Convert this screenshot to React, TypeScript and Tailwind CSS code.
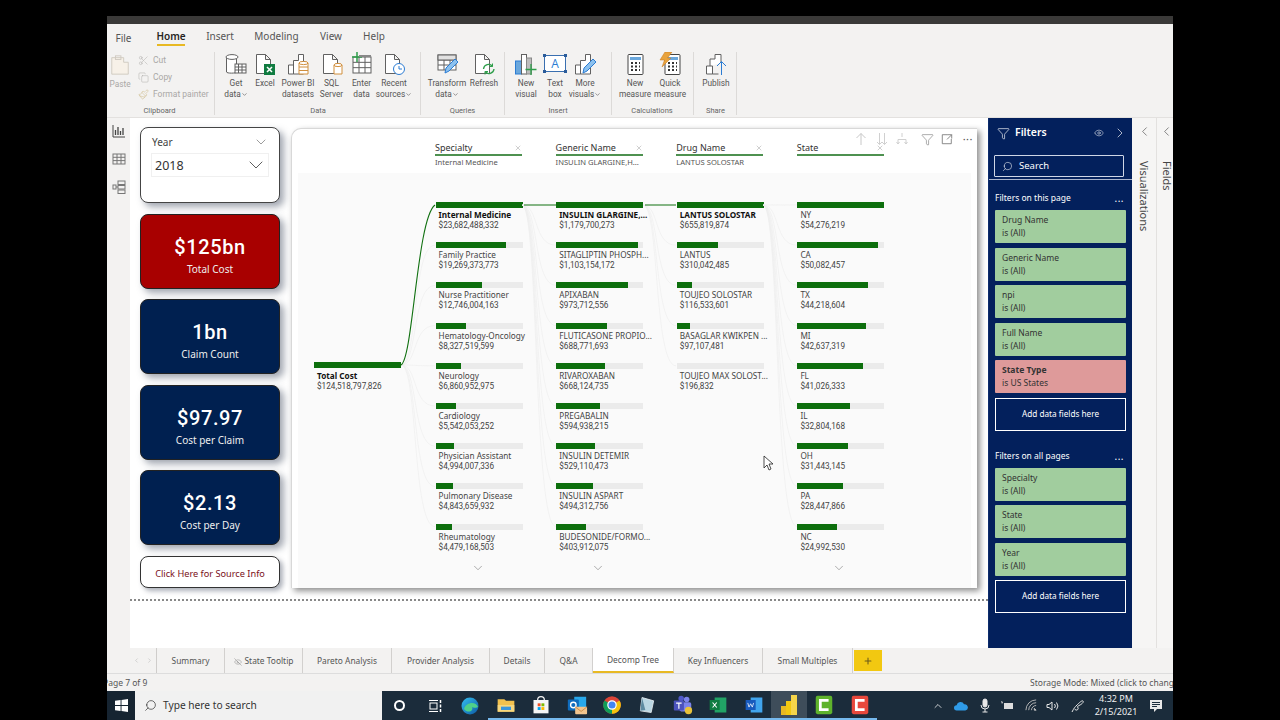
import React from "react";
import { ChevronDown, ChevronLeft, ChevronRight, ChevronUp, Copy, Eye, EyeOff, Filter, Paintbrush, Plus, Scissors, Search, X } from "lucide-react";

const S = ({ children, s = 24 }: { children: React.ReactNode; s?: number }) => (
  <svg width={s} height={s} viewBox="0 0 24 24" fill="none" stroke="#616161" strokeWidth="1">{children}</svg>
);
const Doc = () => <path d="M3.5 2.5h9l5 5v14h-14z M12.5 2.5v5h5" fill="#fff" />;
const Bars = () => <path d="M2.5 22v-9h5v9z M7.5 22V8.500h5V2.500h5v19.500z" fill="#fff" />;
const Cyl = ({ x = 14, y = 13, w = 8, h = 9 }) => (
  <g stroke="#d18f3d" fill="#fff"><path d={`M${x} ${y}v${h}h${w}v-${h}`} /><ellipse cx={x + w / 2} cy={y} rx={w / 2} ry="1.600" /></g>
);
const Tbl = ({ x = 3, y = 4, w = 18, h = 16 }) => (
  <g fill="#fff"><rect x={x} y={y} width={w} height={h} /><path d={`M${x} ${y + h / 3}h${w}M${x} ${y + 2 * h / 3}h${w}M${x + w / 3} ${y}v${h}M${x + 2 * w / 3} ${y}v${h}`} /></g>
);
const Pencil = () => <path d="M10 21l1-5L20 7l3 3-9 9z" fill="#8cc1ee" stroke="#2b7cd3" />;
const Calc = ({ x = 5 }) => (
  <g><rect x={x} y="2.500" width="15" height="20" rx="1" fill="#fff" stroke="#444" /><rect x={x + 2} y="5" width="11" height="3" fill="#6aa7dc" stroke="none" />
    <path d={`M${x + 3} 11h2M${x + 7} 11h2M${x + 11} 11h1M${x + 3} 14.500h2M${x + 7} 14.500h2M${x + 11} 14.500h1M${x + 3} 18h2M${x + 7} 18h2M${x + 11} 18h1`} stroke="#333" strokeWidth="1.800" /></g>
);

const icons: Record<string, React.ReactNode> = {
  get: <S><path d="M2.500 5v15c0 1.500 10 1.500 10 0V5" fill="#fff" /><ellipse cx="8" cy="5" rx="6" ry="2.400" fill="#fff" /><rect x="11" y="12" width="11" height="9" fill="#fff" /><path d="M11 15h11M11 18h11M14.500 12v9M18 12v9" /></S>,
  excel: <S><Doc /><rect x="11" y="12" width="11" height="11" fill="#107c41" stroke="none" /><path d="M14 15l5 5M19 15l-5 5" stroke="#fff" strokeWidth="1.500" /></S>,
  pbi: <S><Bars /><Cyl x={13} y={11} w={9} h={11} /><path d="M13 15h9M13 18.500h9" stroke="#d18f3d" /></S>,
  sql: <S><Doc /><Cyl /></S>,
  enter: <S><Tbl y={5} h={16} /><path d="M7 0v10M2 5h10" stroke="#2e9e4a" strokeWidth="1.500" /><rect x="9" y="3" width="12" height="2" fill="#888" stroke="none" /></S>,
  recent: <S><Doc /><circle cx="17" cy="17" r="5.500" fill="#fff" stroke="#2b7cd3" /><path d="M17 14v3h3" stroke="#2b7cd3" /></S>,
  transform: <S><Tbl y={3} h={15} /><rect x="3" y="3" width="18" height="5" fill="#e1e1e1" /><Pencil /></S>,
  refresh: <S><Doc /><path d="M11.500 17a5 5 0 0 1 9-2.500M22 17a5 5 0 0 1-9 2.500" stroke="#2e9e4a" strokeWidth="1.300" /><path d="M20.500 11.500v3h-3M13 22.500v-3h3" stroke="#2e9e4a" /></S>,
  newv: <S><rect x="1.500" y="9" width="6" height="13" fill="#6aa7dc" stroke="#2b7cd3" /><rect x="7.500" y="2.500" width="5" height="19.500" fill="#fff" /><rect x="12.500" y="6" width="5" height="16" fill="#bdbdbd" stroke="#888" /><path d="M17 12v11M11.500 17.500h11" stroke="#2e9e4a" strokeWidth="1.300" /></S>,
  text: <S><rect x="1.500" y="3.500" width="21" height="16" fill="#fff" stroke="#3a6fb0" /><text x="12" y="16" fontSize="12" textAnchor="middle" fill="#2b7cd3" stroke="none" fontFamily="Open Sans">A</text><path d="M0 2h3v3H0zM21 2h3v3h-3zM0 18h3v3H0zM21 18h3v3h-3z" fill="#2b5c9a" stroke="none" /></S>,
  more: <S><Bars /><Pencil /></S>,
  measure: <S><Calc /></S>,
  quick: <S><Calc x={7} /><path d="M7 0h7L9.500 6H13L4 15l2.500-7H2z" fill="#e8a33d" stroke="#c9761a" strokeWidth="0.500" /></S>,
  publish: <S><path d="M2.500 22v-8h6v8z M6 14V7h5V2.500h6V11" fill="#fff" /><path d="M8.500 22h6" /><path d="M17.500 23V10M13 14l4.500-4.500L22 14" stroke="#2b7cd3" /></S>,
};

type Btn = { k: string; a: string; b?: string; w: string; caret?: boolean };
type Grp = { label: string; cls: string; items: Btn[] };
const groups: Grp[] = [
  { label: "Data", cls: "w-[206px] pl-[7px]", items: [
    { k: "get", a: "Get", b: "data", w: "w-[28px]", caret: true }, { k: "excel", a: "Excel", w: "w-[30px]" }, { k: "pbi", a: "Power BI", b: "datasets", w: "w-[36px]" },
    { k: "sql", a: "SQL", b: "Server", w: "w-[31px]" }, { k: "enter", a: "Enter", b: "data", w: "w-[29px]" }, { k: "recent", a: "Recent", b: "sources", w: "w-[36px]", caret: true } ] },
  { label: "Queries", cls: "w-[84px] pl-[6px]", items: [
    { k: "transform", a: "Transform", b: "data", w: "w-[40px]", caret: true }, { k: "refresh", a: "Refresh", w: "w-[34px]" } ] },
  { label: "Insert", cls: "w-[107px] pl-[6px]", items: [
    { k: "newv", a: "New", b: "visual", w: "w-[30px]" }, { k: "text", a: "Text", b: "box", w: "w-[28px]" }, { k: "more", a: "More", b: "visuals", w: "w-[32px]", caret: true } ] },
  { label: "Calculations", cls: "w-[82px] pl-[5px]", items: [
    { k: "measure", a: "New", b: "measure", w: "w-[36px]" }, { k: "quick", a: "Quick", b: "measure", w: "w-[34px]" } ] },
  { label: "Share", cls: "w-[43px] pl-[7px]", items: [{ k: "publish", a: "Publish", w: "w-[30px]" }] },
];

const ribbonTabs = [
  { t: "File", c: "ml-[9px] w-[15px] text-[10px] pt-[2px]" },
  { t: "Home", c: "ml-[26px] w-[28px] font-semibold border-b-2 border-[#e8b923] text-[#252423]" },
  { t: "Insert", c: "ml-[22px] w-[26px]" },
  { t: "Modeling", c: "ml-[22px] w-[43px]" },
  { t: "View", c: "ml-[22px] w-[22px]" },
  { t: "Help", c: "ml-[21px] w-[22px]" },
];

const R = (name: string, v: string) => ({ name, v });
const specialty = [R("Internal Medicine", "$23,682,488,332"), R("Family Practice", "$19,269,373,773"), R("Nurse Practitioner", "$12,746,004,163"), R("Hematology-Oncology", "$8,327,519,599"), R("Neurology", "$6,860,952,975"), R("Cardiology", "$5,542,053,252"), R("Physician Assistant", "$4,994,007,336"), R("Pulmonary Disease", "$4,843,659,932"), R("Rheumatology", "$4,479,168,503")];
const generic = [R("INSULIN GLARGINE,...", "$1,179,700,273"), R("SITAGLIPTIN PHOSPH...", "$1,103,154,172"), R("APIXABAN", "$973,712,556"), R("FLUTICASONE PROPIO...", "$688,771,693"), R("RIVAROXABAN", "$668,124,735"), R("PREGABALIN", "$594,938,215"), R("INSULIN DETEMIR", "$529,110,473"), R("INSULIN ASPART", "$494,312,756"), R("BUDESONIDE/FORMO...", "$403,912,075")];
const drug = [R("LANTUS SOLOSTAR", "$655,819,874"), R("LANTUS", "$310,042,485"), R("TOUJEO SOLOSTAR", "$116,533,601"), R("BASAGLAR KWIKPEN ...", "$97,107,481"), R("TOUJEO MAX SOLOST...", "$196,832")];
const state = [R("NY", "$54,276,219"), R("CA", "$50,082,457"), R("TX", "$44,218,604"), R("MI", "$42,637,319"), R("FL", "$41,026,333"), R("IL", "$32,804,168"), R("OH", "$31,443,145"), R("PA", "$28,447,866"), R("NC", "$24,992,530")];
const num = (s: string) => Number(s.replace(/[$,]/g, ""));

const cols = [
  { title: "Specialty", sub: "Internal Medicine", rows: specialty, more: true, bold: true },
  { title: "Generic Name", sub: "INSULIN GLARGINE,H...", rows: generic, more: true, bold: true },
  { title: "Drug Name", sub: "LANTUS SOLOSTAR", rows: drug, more: false, bold: true },
  { title: "State", sub: "", rows: state, more: true, bold: false },
];

function curve(x1: number, y1: number, x2: number, y2: number) {
  const m = (x1 + x2) / 2;
  return `M${x1} ${y1}C${m} ${y1} ${m - 6} ${y2} ${x2} ${y2}`;
}
const Connectors = () => {
  const light: string[] = [];
  const rowY = (i: number) => 77 + i * 40.2;
  for (let i = 1; i < 9; i++) light.push(curve(110, 237, 144, rowY(i)));
  for (let i = 1; i < 9; i++) light.push(curve(231, 77, 265, rowY(i)));
  for (let i = 1; i < 5; i++) light.push(curve(352, 77, 385, rowY(i)));
  for (let i = 0; i < 9; i++) light.push(curve(472, 77, 506, rowY(i)));
  return (
    <svg className="absolute -left-px -top-px pointer-events-none" width="686" height="460" fill="none">
      {light.map((d, i) => <path key={i} d={d} stroke="#ececec" strokeWidth="0.600" />)}
      <path d="M110 237C122 231 126 90 144 77" stroke="#107010" strokeWidth="1.100" />
      <path d="M233 77h32M354 77h31" stroke="#107010" strokeWidth="1.100" />
    </svg>
  );
};

const Node = ({ name, v, pct, bold }: { name: string; v: string; pct: number; bold?: boolean }) => (
  <div className="h-[40.2px]">
    <div className="h-[6px] w-[87px] bg-[#ebebeb]"><div className="h-full bg-[#0d6f0d]" style={{ width: `${pct}%` }} /></div>
    <div className={`ml-[3px] mt-[2px] text-[8.200px] leading-[10px] whitespace-nowrap ${bold ? "font-bold text-[#111]" : "text-[#444]"}`}>{name}</div>
    <div className="ml-[3px] text-[8.200px] leading-[10px] text-[#444] whitespace-nowrap font-['Roboto',sans-serif]">{v}</div>
  </div>
);

const Kpi = ({ v, l, red }: { v: string; l: string; red?: boolean }) => (
  <div className={`h-[75px] rounded-[8px] border border-[#222] shadow-[4px_4px_7px_rgba(70,80,100,0.5)] flex flex-col items-center justify-center text-white pt-[7px] ${red ? "bg-[#a80000]" : "bg-[#002050]"}`}>
    <div className="text-[20px] leading-[26px] font-medium tracking-[0.6px] font-['Roboto',sans-serif]">{v}</div>
    <div className="mt-[2px] text-[10px] leading-[14px] text-[#eee]">{l}</div>
  </div>
);

const FilterCard = ({ a, b = "is (All)", pink }: { a: string; b?: string; pink?: boolean }) => (
  <div className={`h-[33px] mb-[4.500px] mx-[6px] rounded-[1px] pl-[7px] pt-[3px] text-[8.500px] leading-[13px] text-[#333] ${pink ? "bg-[#de9a9a]" : "bg-[#a1cd9e]"}`}>
    <div className={pink ? "font-bold" : ""}>{a}</div><div>{b}</div>
  </div>
);
const AddData = () => (
  <div className="mx-[6px] h-[33px] border border-white flex items-center justify-center text-[8.200px] text-white">Add data fields here</div>
);
const FilterHead = ({ t }: { t: string }) => (
  <div className="mx-[6px] flex items-center justify-between text-[8.500px] leading-[12px] text-white pr-[2px]"><span>{t}</span><span className="text-[10px] leading-[8px] tracking-[0.5px]">...</span></div>
);

const pageTabs = [
  { t: "Summary", w: "w-[68px]" }, { t: "State Tooltip", w: "w-[78px]", eye: true }, { t: "Pareto Analysis", w: "w-[89px]" }, { t: "Provider Analysis", w: "w-[98px]" },
  { t: "Details", w: "w-[55px]" }, { t: "Q&A", w: "w-[48px]" }, { t: "Decomp Tree", w: "w-[81px]", on: true }, { t: "Key Influencers", w: "w-[89px]" }, { t: "Small Multiples", w: "w-[90px]" },
];

const apps: React.ReactNode[] = [
  <svg width="24" height="24" viewBox="0 0 24 24" fill="none"><circle cx="12" cy="12" r="8.500" fill="url(#e1)" /><path d="M6 15c2-7 12-8 14-2-1 1-5 1-6 0 2 4-4 7-8 2z" fill="#4fd08a" /><defs><linearGradient id="e1" x1="0" y1="0" x2="1" y2="1"><stop stopColor="#35c1f1" /><stop offset="1" stopColor="#0c59a4" /></linearGradient></defs></svg>,
  <svg width="20" height="20" viewBox="0 0 24 24"><path d="M2 5h8l2 2h10v13H2z" fill="#f2c14e" /><rect x="2" y="12" width="20" height="8" fill="#f6d77f" /><rect x="6" y="14" width="12" height="4" fill="#3a96dd" /></svg>,
  <svg width="20" height="20" viewBox="0 0 24 24"><rect x="3" y="6" width="18" height="16" fill="#f5f5f5" /><path d="M8 6a4 4 0 0 1 8 0" stroke="#f5f5f5" strokeWidth="1.500" fill="none" /><rect x="8" y="10" width="3.500" height="3.500" fill="#f25022" /><rect x="12.500" y="10" width="3.500" height="3.500" fill="#7fba00" /><rect x="8" y="14.500" width="3.500" height="3.500" fill="#00a4ef" /><rect x="12.500" y="14.500" width="3.500" height="3.500" fill="#ffb900" /></svg>,
  <svg width="22" height="22" viewBox="0 0 24 24"><rect x="9" y="3" width="13" height="13" fill="#28a8ea" /><rect x="2" y="6" width="12" height="12" rx="1" fill="#0f6cbd" /><circle cx="8" cy="12" r="3" fill="none" stroke="#fff" strokeWidth="1.500" /><rect x="10" y="14" width="13" height="8" rx="1" fill="#f2c48d" /><path d="M10 14l6.500 5 6.500-5" fill="none" stroke="#c98a45" /></svg>,
  <svg width="20" height="20" viewBox="0 0 24 24"><circle cx="12" cy="12" r="10.500" fill="#db4437" /><path d="M12 12L21 6.500A10.500 10.500 0 0 1 12 22.500z" fill="#f4c20d" /><path d="M12 12L12 22.500A10.500 10.500 0 0 1 3 6.500z" fill="#0f9d58" /><circle cx="12" cy="12" r="5" fill="#4285f4" stroke="#fff" strokeWidth="1.500" /></svg>,
  <svg width="20" height="20" viewBox="0 0 24 24"><path d="M6 3l14 4-3 14-13-2z" fill="#b9d6e2" stroke="#e8eef2" /><path d="M6 3L4 19l6-1z" fill="#5d8aa0" /></svg>,
  <svg width="22" height="22" viewBox="0 0 24 24"><circle cx="16" cy="6" r="3" fill="#7b83eb" /><circle cx="10" cy="5" r="3" fill="#5059c9" /><rect x="8" y="9" width="13" height="10" rx="2" fill="#7b83eb" /><rect x="2" y="7" width="11" height="11" rx="1" fill="#4b53bc" /><path d="M4.500 10h6M7.500 10v6" stroke="#fff" strokeWidth="1.300" /><circle cx="18" cy="18" r="4" fill="#e8c23a" /></svg>,
  <svg width="20" height="20" viewBox="0 0 24 24"><rect x="8" y="3" width="14" height="18" fill="#21a366" /><rect x="2" y="6" width="12" height="12" fill="#107c41" /><path d="M5.500 9l5 6M10.500 9l-5 6" stroke="#fff" strokeWidth="1.300" /></svg>,
  <svg width="20" height="20" viewBox="0 0 24 24"><rect x="8" y="3" width="14" height="18" fill="#41a5ee" /><rect x="2" y="6" width="12" height="12" fill="#185abd" /><path d="M4.500 9.500l1.500 5 2-4 2 4 1.500-5" stroke="#fff" strokeWidth="0.900" fill="none" /></svg>,
  <svg width="24" height="24" viewBox="0 0 24 24"><rect x="4" y="13" width="6" height="9" fill="#e8b923" /><rect x="9" y="8" width="6" height="14" fill="#f2c811" /><rect x="14" y="2" width="6" height="20" fill="#f6d54a" /></svg>,
  <svg width="22" height="22" viewBox="0 0 24 24"><rect x="3" y="2" width="18" height="20" rx="2" fill="#5fb32c" /><path d="M17 7H8v10h9" stroke="#fff" strokeWidth="3" fill="none" /></svg>,
  <svg width="22" height="22" viewBox="0 0 24 24"><rect x="3" y="2" width="18" height="20" rx="2" fill="#e8483c" /><path d="M17 7H8v10h9" stroke="#fff" strokeWidth="3" fill="none" /></svg>,
];

export default function App() {
  return (
    <div className="w-[1280px] h-[720px] overflow-hidden bg-black flex justify-center font-['Noto_Sans','Open_Sans',sans-serif] text-[#444]">
      <div className="w-[1066px] h-full flex flex-col">
        <div className="h-[16px] shrink-0 bg-black" />
        <div className="h-[8px] shrink-0 bg-[#3a3938]" />

        {/* Ribbon */}
        <div className="h-[26px] shrink-0 bg-[#f3f2f1] flex items-end pb-[4px] text-[10px] leading-[14px] text-[#555]">
          {ribbonTabs.map((t) => <div key={t.t} className={`${t.c} whitespace-nowrap flex justify-center h-[17px]`}>{t.t}</div>)}
        </div>
        <div className="h-[68px] shrink-0 bg-[#f3f2f1] border-b border-[#e3e1df] flex text-[8.300px] leading-[11px] text-[#555] font-['Roboto',sans-serif]">
          <div className="w-[108px] flex flex-col border-r border-[#dcdad8] my-[2px]">
            <div className="flex flex-1 pl-[3px] text-[#aaa8a6]">
              <div className="w-[20px] flex flex-col items-center pt-[1px]">
                <svg width="22" height="24" viewBox="0 0 24 24" fill="none" stroke="#cfc9c0"><path d="M3 4h13v5h5v13H3z" fill="#f7f1e8" /><rect x="7" y="2" width="6" height="4" /></svg>
                <div className="mt-[2px]">Paste</div>
              </div>
              <div className="ml-[8px] flex flex-col gap-[3px] pt-[1px] text-[8.500px]">
                <div className="flex items-center gap-[4px] h-[14px]"><Scissors size={11} strokeWidth={1} color="#a9a7a5" />Cut</div>
                <div className="flex items-center gap-[4px] h-[14px]"><Copy size={11} strokeWidth={1} color="#a9a7a5" />Copy</div>
                <div className="flex items-center gap-[4px] h-[14px]"><Paintbrush size={11} strokeWidth={1} color="#c9b27a" />Format painter</div>
              </div>
            </div>
            <div className="h-[12px] pt-[2px] text-center text-[7.500px] text-[#666] pr-[2px]">Clipboard</div>
          </div>
          {groups.map((g) => (
            <div key={g.label} className={`${g.cls} shrink-0 flex flex-col border-r border-[#dcdad8] my-[2px]`}>
              <div className="flex flex-1">
                {g.items.map((b) => (
                  <div key={b.k} className={`${b.w} shrink-0 flex flex-col items-center`}>
                    {icons[b.k]}
                    <div className="mt-[2px] whitespace-nowrap">{b.a}</div>
                    {b.b && <div className="whitespace-nowrap flex items-center">{b.b}{b.caret && <ChevronDown size={7} strokeWidth={2} />}</div>}
                  </div>
                ))}
              </div>
              <div className="h-[12px] pt-[2px] text-center text-[7.500px] text-[#666] -ml-[6px]">{g.label}</div>
            </div>
          ))}
        </div>

        {/* Body */}
        <div className="h-[530px] shrink-0 flex">
          <div className="w-[23px] shrink-0 bg-[#f3f2f1] flex flex-col items-center pt-[6px] gap-[14px]">
            <svg width="14" height="14" viewBox="0 0 14 14" fill="none" stroke="#444"><path d="M1 1v12h12" /><path d="M3.500 11V6M6 11V3M8.500 11V7M11 11V4" strokeWidth="1.300" /></svg>
            <svg width="14" height="14" viewBox="0 0 14 14" fill="none" stroke="#777"><rect x="1" y="2" width="12" height="10" /><path d="M1 5.300h12M1 8.600h12M5 2v10M9 2v10" /></svg>
            <svg width="14" height="14" viewBox="0 0 14 14" fill="none" stroke="#777"><rect x="6" y="1" width="7" height="3.500" /><rect x="6" y="5.500" width="7" height="3.500" /><rect x="6" y="10" width="7" height="3.500" /><rect x="1" y="5" width="3" height="4" /><path d="M4 7h2" /></svg>
          </div>

          <div className="w-[858px] shrink-0 bg-white flex flex-col">
            <div className="flex h-[461px] mt-[9px] pl-[10px]">
              <div className="w-[140px] flex flex-col gap-[10.500px] shrink-0">
                <div className="h-[76px] rounded-[8px] border border-[#444] bg-white shadow-[4px_4px_7px_rgba(70,80,100,0.5)] px-[10px] pt-[7px]">
                  <div className="flex items-center justify-between text-[10px] leading-[14px] text-[#444] pl-[1px] h-[14px]">Year<ChevronDown size={16} strokeWidth={0.800} /></div>
                  <div className="mt-[4px] h-[24px] border border-[#f0f0f0] flex items-center justify-between text-[12.500px] text-[#333] pl-[3px] pt-[3px]">2018<ChevronDown className="-mt-[3px]" size={24} strokeWidth={0.800} /></div>
                </div>
                <Kpi v="$125bn" l="Total Cost" red />
                <Kpi v="1bn" l="Claim Count" />
                <Kpi v="$97.97" l="Cost per Claim" />
                <Kpi v="$2.13" l="Cost per Day" />
                <div className="h-[32px] rounded-[8px] border border-[#333] bg-white shadow-[3px_3px_5px_rgba(70,80,100,0.45)] flex items-center justify-center text-[9.200px] text-[#7a1020] pt-[4px]">Click Here for Source Info</div>
              </div>

              <div className="relative ml-[11px] mt-px w-[686px] h-[460px] bg-white rounded-tl-[10px] border-l border-t border-[#d8d8d8] shadow-[3px_3px_6px_rgba(0,0,0,0.45)] shrink-0">
                <div className="h-[44px] flex pl-[143px] gap-[33.600px] relative">
                  {cols.map((c) => (
                    <div key={c.title} className="w-[87px] shrink-0 pt-[12px]">
                      <div className="flex items-center justify-between border-b-2 border-[#4e9150] h-[15px] text-[9px] text-[#333]">
                        <span className="mt-[1px]">{c.title}</span><X size={8} strokeWidth={1.200} color="#888" className="mb-[-1px]" />
                      </div>
                      <div className="text-[7.600px] leading-[12px] whitespace-nowrap text-[#555]">{c.sub}</div>
                    </div>
                  ))}
                </div>
                <div className="absolute right-[2px] top-[3px] flex items-center text-[#c4c4c4] h-[14px]">
                  <svg width="14" height="14" viewBox="0 0 14 14" fill="none" stroke="#c8c8c8"><path d="M7 13V1.500M2.500 6L7 1.500 11.500 6" /></svg>
                  <svg className="ml-[7px]" width="14" height="14" viewBox="0 0 14 14" fill="none" stroke="#d0d0d0"><path d="M4.500 1v11.500M2 10l2.500 2.500L7 10M9.500 1v11.500M7 10l2.500 2.500L12 10" /></svg>
                  <svg className="ml-[6px]" width="14" height="14" viewBox="0 0 14 14" fill="none" stroke="#d0d0d0"><path d="M7 1v4M3 12V7.500h8V12M1.500 10L3 12l1.500-2M9.500 10l1.500 2 1.500-2" /></svg>
                  <Filter className="ml-[12px]" size={13} strokeWidth={1} color="#666" />
                  <svg className="ml-[7px]" width="12" height="12" viewBox="0 0 14 14" fill="none" stroke="#777"><path d="M8 2H1.500v10.500H12V7M8 2h4.500v4.500M12.500 2L7 7.500" /></svg>
                  <span className="ml-[10px] mr-[2px] text-[#555] text-[11px] leading-[6px] tracking-[0.5px]">···</span>
                </div>
                <div className="mx-[6px] h-[415px] bg-[#fafafa] flex pl-[17px] pt-[29px] gap-[33.600px]">
                  <div className="w-[87px] shrink-0 pt-[160px] -ml-px mr-px">
                    <div className="h-[6px] bg-[#0d6f0d]" />
                    <div className="ml-[3px] mt-[3px] text-[8.200px] leading-[10px] font-bold text-[#111]">Total Cost</div>
                    <div className="ml-[3px] text-[8.200px] leading-[10px] text-[#444] font-['Roboto',sans-serif]">$124,518,797,826</div>
                  </div>
                  {cols.map((c) => {
                    const max = num(c.rows[0].v);
                    return (
                      <div key={c.title} className="w-[87px] shrink-0">
                        {c.rows.map((r, i) => <Node key={r.name} name={r.name} v={r.v} pct={(num(r.v) / max) * 100} bold={c.bold && i === 0} />)}
                        {c.more && <div className="flex justify-center pr-[3px] -mt-[3px]"><ChevronDown size={14} strokeWidth={0.900} color="#666" /></div>}
                      </div>
                    );
                  })}
                </div>
                <Connectors />
              </div>
            </div>
            <div className="mt-[11px] border-t-2 border-dotted border-[#888]" />
          </div>

          {/* Filters */}
          <div className="w-[144px] shrink-0 bg-[#03205c] flex flex-col text-white border-l border-[#0d2c6c]">
            <div className="h-[29px] flex items-center pl-[8px] pr-[4px] pt-[1px]">
              <Filter size={13} strokeWidth={1.200} />
              <span className="ml-[5px] text-[10.500px] font-semibold">Filters</span>
              <Eye className="ml-auto" size={10} strokeWidth={1.200} />
              <ChevronRight className="ml-[8px]" size={16} strokeWidth={1} />
            </div>
            <div className="ml-[5px] mr-[8px] mt-[8px] h-[22px] border border-[#cfd6e6] rounded-[1px] flex items-center pl-[7px] text-[9.500px]">
              <Search size={11} strokeWidth={1.200} className="-scale-x-100" /><span className="ml-[6px]">Search</span>
            </div>
            <div className="mt-[2px] border-t border-[#aab4cc]" />
            <div className="mt-[12px]"><FilterHead t="Filters on this page" /></div>
            <div className="mt-[6px]">
              <FilterCard a="Drug Name" /><FilterCard a="Generic Name" /><FilterCard a="npi" /><FilterCard a="Full Name" />
              <FilterCard a="State Type" b="is US States" pink />
              <AddData />
            </div>
            <div className="mt-[19px]"><FilterHead t="Filters on all pages" /></div>
            <div className="mt-[6px]">
              <FilterCard a="Specialty" /><FilterCard a="State" /><FilterCard a="Year" />
              <AddData />
            </div>
          </div>

          <div className="w-[25px] shrink-0 bg-[#f6f5f4] border-r border-[#e3e1df] flex flex-col items-center pt-[6px] text-[#444]">
            <ChevronLeft size={15} strokeWidth={1} />
            <div className="mt-[22px] [writing-mode:vertical-rl] text-[11px] leading-[14px]">Visualizations</div>
          </div>
          <div className="w-[16px] shrink-0 bg-[#f6f5f4] flex flex-col items-center pt-[6px] pl-[3px] text-[#444]">
            <ChevronLeft size={15} strokeWidth={1} />
            <div className="mt-[22px] [writing-mode:vertical-rl] text-[11px] leading-[14px]">Fields</div>
          </div>
        </div>

        {/* Tabs */}
        <div className="h-[26px] shrink-0 bg-[#f3f2f1] flex text-[8.400px] text-[#555] border-b border-[#ddd]">
          <div className="w-[23px] shrink-0 bg-[#f3f2f1]" />
          <div className="w-[27px] shrink-0 flex items-center justify-center gap-[6px] text-[#bbb] border-r border-[#cfcdcb]">
            <ChevronLeft size={7} strokeWidth={2} /><ChevronRight size={7} strokeWidth={2} />
          </div>
          {pageTabs.map((t) => (
            <div key={t.t} className={`${t.w} shrink-0 flex items-center justify-center gap-[3px] border-r border-[#d2d0ce] whitespace-nowrap pt-[2px] ${t.on ? "bg-white border-b-2 border-b-[#e8b923]" : ""}`}>
              {t.eye && <EyeOff size={8} strokeWidth={1} />}{t.t}
            </div>
          ))}
          <div className="ml-px my-[2px] w-[28px] bg-[#f2c811] flex items-center justify-center"><Plus size={10} strokeWidth={2.500} color="#6b5a1a" /></div>
        </div>

        {/* Status */}
        <div className="h-[17px] shrink-0 bg-[#f3f2f1] flex items-center justify-between text-[8.500px] text-[#555] overflow-hidden whitespace-nowrap pt-[1px]">
          <span className="-ml-[4px]">Page 7 of 9</span>
          <span className="w-[143px] overflow-hidden">Storage Mode: Mixed (click to change)</span>
        </div>

        {/* Taskbar */}
        <div className="h-[29px] shrink-0 bg-[#1b2c3b] flex text-white">
          <div className="w-[28px] shrink-0 bg-[#162431] flex items-center justify-center">
            <svg width="13" height="13" viewBox="0 0 14 14" fill="#fff"><path d="M0 2l6-1v5.500H0zM7 1l7-1v6.500H7zM0 7.500h6V13l-6-1zM7 7.500h7V14l-7-1z" /></svg>
          </div>
          <div className="w-[247px] shrink-0 bg-[#f1f1f1] flex items-center pl-[9px] text-[10.200px] text-[#333]">
            <Search size={13} strokeWidth={1.200} color="#222" className="-scale-x-100" /><span className="ml-[6px] mt-[1px]">Type here to search</span>
          </div>
          <div className="w-[35.400px] shrink-0 flex items-center justify-center"><div className="w-[11px] h-[11px] rounded-full border-2 border-white" /></div>
          <div className="w-[35.400px] shrink-0 flex items-center justify-center">
            <svg width="14" height="14" viewBox="0 0 14 14" fill="none" stroke="#fff"><path d="M1 1.500h9M1 12.500h9" /><rect x="2" y="4" width="7" height="6" /><path d="M12.500 1v3M12.500 5.500v3M12.500 10v3" strokeWidth="1.500" /></svg>
          </div>
          {apps.map((a, i) => (
            <div key={i} className={`w-[35.400px] shrink-0 flex items-center justify-center ${i === 9 ? "bg-[#3e4d5a]" : ""} ${i === 0 ? "" : "border-b-2 border-[#76b9ed]"}`}>{a}</div>
          ))}
          <div className="ml-auto flex items-center shrink-0">
            <div className="w-[22px] flex justify-center"><ChevronUp size={12} strokeWidth={1.500} /></div>
            <div className="w-[24px] flex justify-center"><svg width="14" height="10" viewBox="0 0 16 10" fill="#2f9be8"><path d="M3 10a3 3 0 0 1 0-6 4.500 4.500 0 0 1 8.500-1A3.500 3.500 0 0 1 13 10z" /></svg></div>
            <div className="w-[23px] flex justify-center"><svg width="12" height="15" viewBox="0 0 12 15" fill="none" stroke="#e8e8e8"><rect x="4" y="1" width="4" height="8" rx="2" fill="#e8e8e8" /><path d="M2 7a4 4 0 0 0 8 0M6 11v3M3.500 14h5" /></svg></div>
            <div className="w-[24px] flex justify-center"><svg width="14" height="11" viewBox="0 0 14 11" fill="#ddd"><path d="M0 1l2 1-1 2zM3 3h9v6H3z" /></svg></div>
            <div className="w-[22px] flex justify-center"><svg width="13" height="13" viewBox="0 0 14 14" fill="none" stroke="#bbb"><path d="M1 12a11 11 0 0 1 11-11M4 12a8 8 0 0 1 8-8M7 12a5 5 0 0 1 5-5" /><path d="M10 10l2 2h-2z" fill="#eee" /></svg></div>
            <div className="w-[21px] flex justify-center"><svg width="14" height="12" viewBox="0 0 14 12" fill="none" stroke="#e8e8e8"><path d="M1 4.500v3h2L6 10V2L3 4.500zM8.500 4a3 3 0 0 1 0 4M10.500 2.500a5.500 5.500 0 0 1 0 7" /></svg></div>
            <div className="w-[30px] flex justify-center"><svg width="14" height="14" viewBox="0 0 14 14" fill="none" stroke="#e8e8e8"><path d="M1 13c2-4 3-5 5-7s5-5 6-4-1 3-3 4-3 1-2 3-3 3-3 1" /></svg></div>
            <div className="w-[46px] flex flex-col items-center text-[9px] leading-[12.500px] text-[#f0f0f0]"><span>4:32 PM</span><span>2/15/2021</span></div>
            <div className="w-[34px] flex justify-center"><svg width="14" height="14" viewBox="0 0 14 14" fill="#e8e8e8"><path d="M1 1h12v9H8l-3 3v-3H1z" /><path d="M3 3.500h8M3 5.500h8M3 7.500h5" stroke="#1b2c3b" /></svg></div>
          </div>
        </div>
      </div>

      <svg className="absolute left-[763px] top-[455px]" width="11" height="16" viewBox="0 0 11 16"><path d="M1 1v12l3-3 2 5 2-1-2-5h4z" fill="#fff" stroke="#222" strokeWidth="0.800" /></svg>
    </div>
  );
}
